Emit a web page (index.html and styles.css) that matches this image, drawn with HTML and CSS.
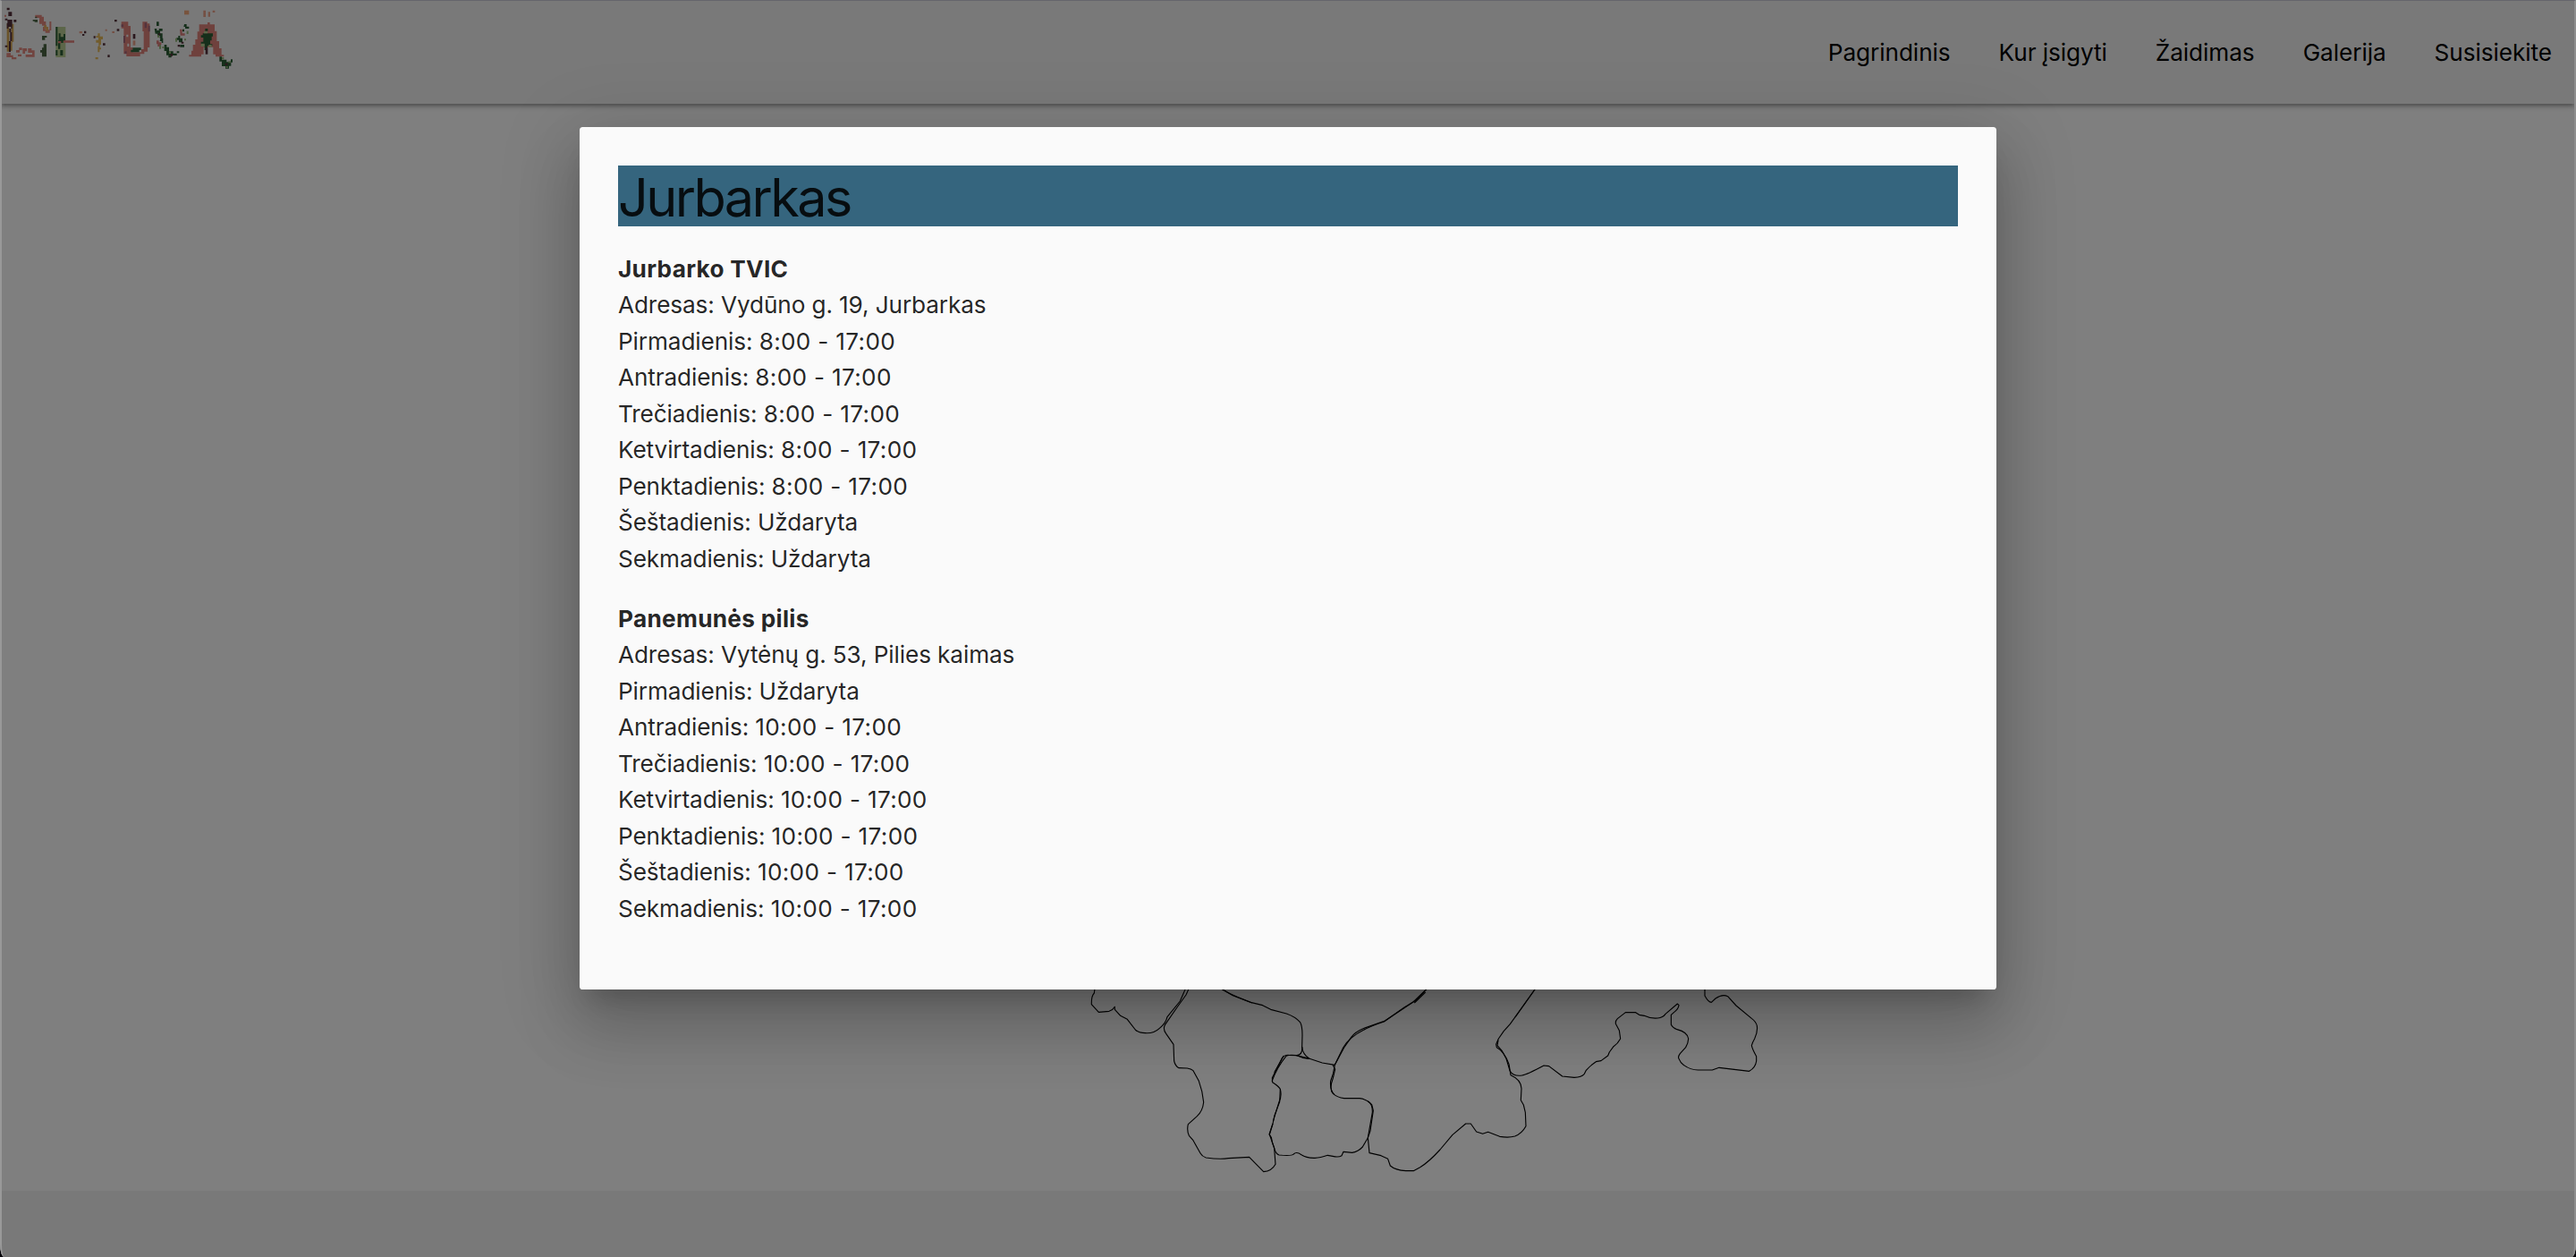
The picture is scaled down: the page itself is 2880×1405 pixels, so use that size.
FILE: index.html
```html
<!DOCTYPE html>
<html lang="lt">
<head>
<meta charset="utf-8">
<title>Lietuva</title>
<link rel="stylesheet" href="styles.css">
</head>
<body>
<div class="page">
  <header class="nav">
    <svg class="logo" viewBox="0 0 840 240" role="img" aria-label="Lietuva">
      <!-- L -->
      <g fill="#d3a145"><path d="M23 78h8v95h-8zM38 80h8v60h-8zM36 140h5v30h-5z"/></g>
      <g fill="#48202c"><path d="M23 26h9v8h-9zM28 40h12v14h-12zM17 62h8v6h-8zM25 66h16v30h-4v-6h-9v6h-5v-18h2zM46 66h9v8h-9zM31 96h6v12h-6zM34 108h6v30h-6zM30 138h6v36h-6zM17 152h8v6h-8z"/></g>
      <g fill="#e27f76"><path d="M15 50h6v6h-6zM22 178h14v7h8v7h11v7h-16v-7h-17zM54 168h8v8h-8zM64 160h10v8h-8v8h-8v-8h6zM76 162h14v10h-6v8h-8zM60 182h12v7h-12zM94 162h12v7h10v22h-30v-8h22v-6h-14z"/></g>
      <!-- I -->
      <path fill="#e27f76" d="M118 50h22v6h7v16h7v20h-6v-6h-7v-6h-9v-20h-14zM166 72h6v30h-5v8h-15v-6h-8v-14h8v10h14z"/>
      <path fill="#e3a757" d="M148 84h8v6h6v14h-8v-7h-6z"/>
      <path fill="#3c5a35" d="M110 66h16v8h-10v-3h-6zM118 56h6v5h-6zM141 120h16v6h-6v8h-10zM146 148h10v42h-15v-14h-6v-8h6v-8h5z"/>
      <!-- E -->
      <path fill="#b3c98a" d="M187 90h33v102h-33z"/>
      <path fill="#1d5227" d="M187 90h6v64h-6zM197 112h6v12h10v-10h6v24h-7v6h-10v20h-7v-30h2zM187 168h6v18h-6zM202 168h9v18h-9zM195 156h6v7h-6z"/>
      <path fill="#e07870" d="M195 138h10v7h-10zM213 136h36v7h-36z"/>
      <!-- T -->
      <path fill="#48202c" d="M282 104h7v8h-7zM276 114h7v6h-7zM314 121h6v7h-6zM345 145h8v7h-8zM361 184h7v8h-7zM384 66h8v7h-8zM392 97h8v7h-8z"/>
      <path fill="#e9997f" d="M266 105h10v7h-10zM353 98h6v6h-6zM376 105h8v6h-8z"/>
      <path fill="#e3b34d" d="M328 112h7v10h10v10h-6v18h-4v10h4v6h-5v9h-6v-20h3v-12h-9v-9h8v-8h-8v-5h6zM320 192h9v7h-9z"/>
      <!-- U -->
      <path fill="#de7a71" d="M407 73h23v14h8v72h8v16h28v-10h8v-60h-4v-32h16v6h8v80h-7v14h-11v8h-14v8h-46v-8h-9v-38h2v-24h-2v-24h-8z"/>
      <path fill="#a05c70" d="M407 82h7v8h-7zM485 76h7v18h-7zM414 120h6v24h-6zM497 86h6v20h-6zM418 172h7v8h-7z"/>
      <path fill="#f3f3f3" d="M424 116h6v8h-6zM427 146h6v10h-6z"/>
      <path fill="#225c31" d="M445 160h28v8h-6v7h-28v-8h6z"/>
      <path fill="#48202c" d="M446 114h8v16h-8z"/><path fill="#e9997f" d="M446 136h8v16h-8z"/>
      <!-- V -->
      <path fill="#1d5227" d="M525 73h8v14h-8zM518 96h8v6h7v-6h12v8h-8v8h8v16h-9v-8h-8v-7h-7zM538 128h9v16h-5v-6h-6zM551 150h8v8h8v14h14v7h12v-7h8v6h-8v8h-18v7h-10v-8h-7v-14h-7zM618 81h8v8h8v7h-13v-6h-5zM612 98h6v8h-6zM598 120h6v8h8v14h-12v-8h-8v-7h6zM604 150h14v8h-14z"/>
      <path fill="#8fb574" d="M528 118h6v8h-6zM534 150h6v14h-6zM544 156h7v6h-7zM567 172h6v8h-6zM588 128h6v12h-6zM618 130h6v6h-6zM626 104h6v10h-6z"/>
      <path fill="#dc7470" d="M525 136h8v6h8v8h-6v6h-6v-8h-4zM603 98h8v14h9v7h-15z"/>
      <path fill="#48202c" d="M572 180h7v8h-7zM596 150h8v7h-8zM608 140h8v6h-8zM532 112h6v6h-6z"/>
      <path fill="#f0a071" d="M618 35h16v14h-16z"/>
      <!-- A -->
      <path fill="#e9997f" d="M682 35h8v22h-8zM698 40h7v16h-7zM713 35h8v7h-8z"/>
      <path fill="#de7a71" d="M696 75h8v7h16v22h7v34h8v24h8v22h8v6h-28v-8h-8v-24h-32v24h-8v8h-41v-6h8v-14h5v-20h8v-18h7v-26h6v-24h28z"/>
      <path fill="#1d5227" d="M688 96h9v8h-9zM680 112h34v10h-4v14h-5v12h7v6h-16v14h-10v-20h-12v-8h8v-14h-8v-8h6z"/>
      <path fill="#b3c98a" d="M684 105h12v7h-12zM674 146h12v10h-12zM700 150h10v8h-10z"/>
      <path fill="#48202c" d="M689 160h8v22h-8z"/>
      <path fill="#1d5227" d="M736 190h8v10h16v8h14v-9h6v10h-5v12h-7v9h-12v-8h-12v-16h-8z"/>
      <path fill="#8fb574" d="M744 192h7v7h-7zM758 222h6v6h-6zM766 205h8v6h-8z"/>
      <path fill="#48202c" d="M755 212h8v7h-8z"/>
    </svg>
    <nav class="nav-links">
      <a>Pagrindinis</a>
      <a>Kur įsigyti</a>
      <a>Žaidimas</a>
      <a>Galerija</a>
      <a>Susisiekite</a>
    </nav>
  </header>

  <main class="map-area">
    <svg class="map" viewBox="-3570 0 8640 753">
      <path d="M104 60L100 90Q90 100 91 128L115 154L150 151Q163 147 169 136V145L188 166L211 178L238 213Q250 224 271 224Q300 226 319 208Q340 192 345 170L388 117L406 76"/>
      <path d="M420 70L408 96L380 135L337 197Q330 212 341 226L366 262L368 318Q372 335 384 341L412 342Q425 344 432 350L451 385Q464 420 467 456Q464 485 445 503L415 530Q410 550 418 568L432 584L456 627Q462 638 475 642Q520 648 550 644L620 640L668 689Q695 688 708 664L704 610L688 564L699 528L705 500L722 455L724 412Q720 403 698 389L697 374L730 308Q738 297 752 298L780 299Q800 296 797 270L798 230Q798 200 791 188Q774 169 745 159L692 145L665 131L628 122L565 98L525 74"/>
      <path d="M530 78Q552 93 630 123M696 386Q712 340 744 301Q760 294 790 302L822 310L865 324L907 331L938 273L962 238Q975 220 1002 209L1075 183L1170 120L1215 76"/>
      <path d="M797 270Q799 296 822 310M780 299L799 307L822 310M907 331L935 273Q965 220 1072 186L1140 138L1178 115L1218 74"/>
      <path d="M900 331L908 345L901 375Q887 412 901 427Q916 440 938 443H990Q1015 446 1031 464L1036 484L1026 552L1018 575L1000 606Q985 622 965 625L936 622L930 635Q920 642 900 637L883 634Q855 644 837 643Q810 642 795 632Q778 620 769 630Q763 637 720 633Q708 628 704 610Q696 590 694 574L687 564L699 528"/>
      <path d="M907 331Q903 360 893 385Q890 415 905 430M1018 452Q1034 462 1033 490L1018 575L1023 626L1062 635L1085 646L1093 669Q1110 684 1145 686H1171L1193 674Q1222 657 1260 615L1302 565L1346 528H1363L1382 555L1403 562L1421 556L1460 571Q1490 576 1511 570Q1535 560 1548 536L1546 490L1540 465L1531 449L1533 410Q1532 380 1497 365L1491 328Q1475 285 1450 272L1448 262L1456 243L1474 217L1495 194L1582 72"/>
      <path d="M1455 248L1452 266L1468 284L1482 310L1494 350Q1505 370 1535 366Q1550 364 1608 333L1625 335L1670 369L1710 373Q1735 372 1744 361L1750 349Q1765 332 1783 320L1800 317L1823 300L1828 288L1842 269Q1856 260 1865 243L1861 215L1849 193Q1848 182 1855 176L1882 155H1916L1928 163L1945 166Q1965 176 1990 174Q2008 172 2016 160L2056 126L2061 130Q2061 142 2045 154L2035 163V196Q2040 207 2055 212Q2090 221 2093 243Q2092 260 2084 272L2065 293Q2057 304 2061 310Q2066 324 2078 332Q2100 348 2125 348H2173L2196 340L2297 352Q2318 340 2321 318V302Q2308 280 2305 266Q2308 255 2315 243Q2326 220 2323 200Q2320 186 2305 175L2253 132L2225 101Q2207 92 2184 108L2170 121Q2160 121 2148 99V65"/>
      <path d="M1578 78L1512 171M1174 123L1211 87M720 455L700 520M724 412Q730 435 720 455M704 356L736 300"/>
    </svg>
  </main>
  <footer class="footer"></footer>
</div>

<div class="overlay">
  <section class="modal" role="dialog">
    <h4 class="modal-title">Jurbarkas</h4>
    <p class="place">
      <b>Jurbarko TVIC</b><br>
      Adresas: Vydūno g. 19, Jurbarkas<br>
      Pirmadienis: <span class="hours">8:00 - 17:00</span><br>
      Antradienis: <span class="hours">8:00 - 17:00</span><br>
      Trečiadienis: <span class="hours">8:00 - 17:00</span><br>
      Ketvirtadienis: <span class="hours">8:00 - 17:00</span><br>
      Penktadienis: <span class="hours">8:00 - 17:00</span><br>
      Šeštadienis: Uždaryta<br>
      Sekmadienis: Uždaryta
    </p>
    <p class="place">
      <b>Panemunės pilis</b><br>
      Adresas: Vytėnų g. 53, Pilies kaimas<br>
      Pirmadienis: Uždaryta<br>
      Antradienis: <span class="hours">10:00 - 17:00</span><br>
      Trečiadienis: <span class="hours">10:00 - 17:00</span><br>
      Ketvirtadienis: <span class="hours">10:00 - 17:00</span><br>
      Penktadienis: <span class="hours">10:00 - 17:00</span><br>
      Šeštadienis: <span class="hours">10:00 - 17:00</span><br>
      Sekmadienis: <span class="hours">10:00 - 17:00</span>
    </p>
  </section>
</div>
<div class="window-edge"></div>
</body>
</html>
```
FILE: styles.css
```css
* { box-sizing: border-box; }

html { background: #0a0512; }

body {
  margin: 0;
  height: 1405px;
  overflow: hidden;
  font-family: Inter, "Liberation Sans", sans-serif;
  font-size: 26.2px;
  line-height: 40.5px;
  letter-spacing: -0.12px;
  color: rgba(0, 0, 0, 0.87);
}

.page {
  display: flex;
  flex-direction: column;
  height: 1405px;
  overflow: hidden;
  background: #fff;
  border-radius: 0 0 5px 5px / 0 0 14px 14px;
}

.nav {
  position: relative;
  display: flex;
  justify-content: space-between;
  height: 116px;
  padding-right: 27px;
  background: #f3f3f3;
  box-shadow: 0 3.6px 3.6px rgba(0, 0, 0, 0.14),
    0 5.4px 1.8px -3.6px rgba(0, 0, 0, 0.12),
    0 1.8px 9px rgba(0, 0, 0, 0.2);
}

.logo {
  width: 280px;
  height: 80px;
  opacity: 0.92;
}

.nav-links {
  display: flex;
  gap: 54px;
  align-items: center;
  padding-top: 2px;
  letter-spacing: -0.07px;
  color: #000;
}

.map-area {
  flex: 1;
  display: flex;
  align-items: flex-end;
}

.map {
  width: 100%;
  height: 251px;
  fill: none;
  stroke: #000;
  stroke-width: 3.4;
  stroke-linejoin: round;
}

.footer {
  height: 74px;
  background: #f3f3f3;
}

/* Dimmed backdrop with the dialog in it */
.overlay {
  position: absolute;
  inset: 0;
  display: flex;
  justify-content: center;
  align-items: flex-start;
  padding-top: 142px;
  background: rgba(0, 0, 0, 0.5);
}

.modal {
  width: 1584px;
  height: 964px;
  padding: 43px;
  background: #fafafa;
  border-radius: 3.6px;
  box-shadow: 0 43.2px 68.4px 5.4px rgba(0, 0, 0, 0.14),
    0 16.2px 82.8px 14.4px rgba(0, 0, 0, 0.12),
    0 19.8px 27px -12.6px rgba(0, 0, 0, 0.2);
}

.modal-title {
  margin: 0 0 27.5px;
  height: 68px;
  background: #35657e;
  font-size: 59.4px;
  font-weight: 400;
  line-height: 70px;
  letter-spacing: -2.6px;
}

.place {
  margin: 0 0 26.5px;
}

.place b {
  letter-spacing: 0.3px;
}

.hours {
  letter-spacing: 0.31px;
}

/* Light hairlines round the browser window */
.window-edge {
  position: absolute;
  inset: 0;
  border: solid;
  border-width: 1px 2px 0;
  border-color: #65656c #8e8e8e transparent #999;
  border-radius: 0 0 5px 5px / 0 0 14px 14px;
}
```
